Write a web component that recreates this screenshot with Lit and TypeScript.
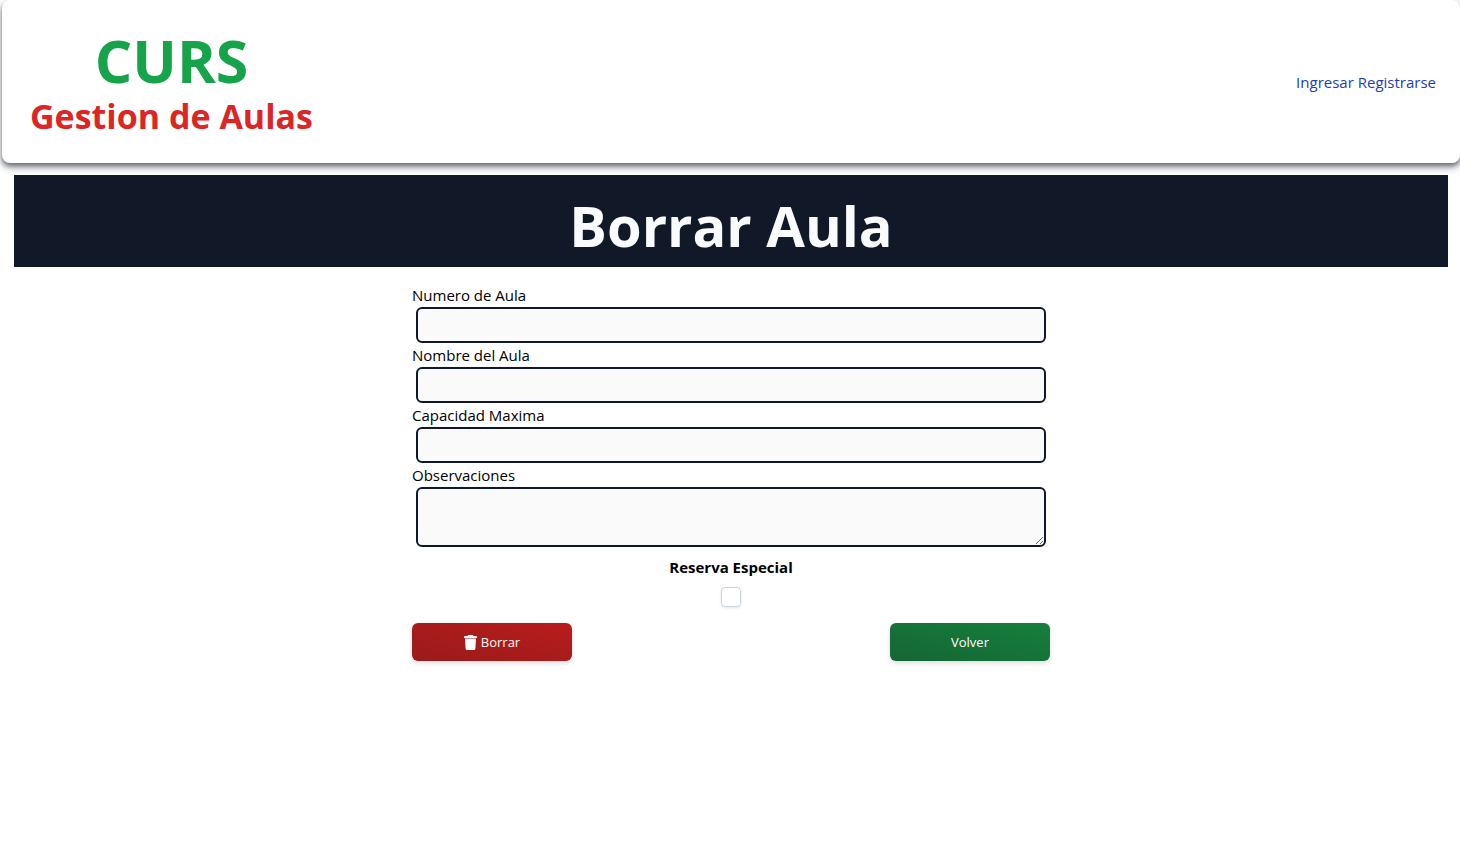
import { LitElement, html, css } from "lit";
import { customElement } from "lit/decorators.js";

@customElement("app-root")
export class AppRoot extends LitElement {
  static styles = css`
    :host {
      display: block;
      font-family: "Segoe UI", "Open Sans", "Noto Sans", sans-serif;
      font-size: 15px;
      line-height: 24px;
      color: #000;
    }
    * {
      box-sizing: border-box;
    }
    .header {
      display: flex;
      align-items: center;
      justify-content: space-between;
      margin-left: 2px;
      padding: 26px 24px 25px 28px;
      background: #fff;
      border-radius: 8px;
      box-shadow: 0 3px 4px #11182766, 0 4px 8px #11182766;
    }
    .brand {
      text-align: center;
      font-weight: 700;
    }
    .name {
      margin: 0;
      font-size: 59px;
      line-height: 68px;
      color: #16a34a;
    }
    .tagline {
      margin: 0;
      font-size: 34px;
      line-height: 44px;
      color: #dc2626;
    }
    .nav a {
      color: #1e40af;
      text-decoration: none;
    }
    .main {
      padding: 12px 12px 12px 14px;
    }
    .title {
      margin: 0 0 16px;
      padding: 20px 16px 12px;
      background: #111827;
      color: #f9fafb;
      text-align: center;
      font-size: 56px;
      line-height: 60px;
      font-weight: 700;
    }
    .form {
      display: flex;
      flex-direction: column;
      max-width: 638px;
      margin: 0 auto;
    }
    .field {
      display: flex;
      flex-direction: column;
    }
    .control {
      display: block;
      height: 36px;
      margin: 0 4px;
      padding: 4px 8px;
      border: 2px solid #111827;
      border-radius: 6px;
      background: #fafafa;
      font: inherit;
      color: inherit;
    }
    .area {
      height: 60px;
      resize: both;
    }
    .special {
      display: flex;
      flex-direction: column;
      align-items: center;
      gap: 8px;
      padding: 8px 0 16px;
      font-weight: 700;
    }
    .check {
      appearance: none;
      width: 20px;
      height: 20px;
      margin: 0;
      border: 1px solid #cbd5e1;
      border-radius: 4px;
      background: #fff;
      box-shadow: 0 1px 3px #0000001a;
    }
    .check:checked {
      background: #1e293b;
    }
    .actions {
      display: flex;
      justify-content: space-between;
    }
    .button {
      display: flex;
      align-items: center;
      justify-content: center;
      gap: 4px;
      width: 160px;
      height: 38px;
      padding: 0;
      border: 0;
      border-radius: 6px;
      color: #fff;
      font: inherit;
      font-size: 13px;
      box-shadow: 0 2px 5px #00000026;
      cursor: pointer;
    }
    .danger {
      background: linear-gradient(to top right, #991b1b, #b91c1c);
    }
    .success {
      background: linear-gradient(to top right, #166534, #15803d);
    }
    .icon {
      width: 13px;
      height: 15px;
    }
  `;

  render() {
    return html`
      <header class="header">
        <div class="brand">
          <p class="name">CURS</p>
          <p class="tagline">Gestion de Aulas</p>
        </div>
        <nav class="nav"><a href="#ingresar">Ingresar</a> <a href="#registrarse">Registrarse</a></nav>
      </header>
      <main class="main">
        <h1 class="title">Borrar Aula</h1>
        <form class="form" @submit=${(e: Event) => e.preventDefault()}>
          <div class="field">
            <label for="numero">Numero de Aula</label>
            <input class="control" id="numero" type="text" />
          </div>
          <div class="field">
            <label for="nombre">Nombre del Aula</label>
            <input class="control" id="nombre" type="text" />
          </div>
          <div class="field">
            <label for="capacidad">Capacidad Maxima</label>
            <input class="control" id="capacidad" type="text" />
          </div>
          <div class="field">
            <label for="observaciones">Observaciones</label>
            <textarea class="control area" id="observaciones"></textarea>
          </div>
          <div class="special">
            <label for="especial">Reserva Especial</label>
            <input class="check" id="especial" type="checkbox" />
          </div>
          <div class="actions">
            <button class="button danger" type="submit">
              <svg class="icon" viewBox="0 0 13 15" fill="#fff" aria-hidden="true">
                <path d="M4.500 0h4a.8.8 0 0 1 .8.900H12a1 1 0 0 1 1 1V3H0V1.900a1 1 0 0 1 1-1h2.700A.8.8 0 0 1 4.500 0z" />
                <path d="M1 3.500h11l-.6 10A1.600 1.600 0 0 1 9.800 15H3.200a1.600 1.600 0 0 1-1.600-1.500z" />
              </svg>
              Borrar
            </button>
            <button class="button success" type="button">Volver</button>
          </div>
        </form>
      </main>
    `;
  }
}
